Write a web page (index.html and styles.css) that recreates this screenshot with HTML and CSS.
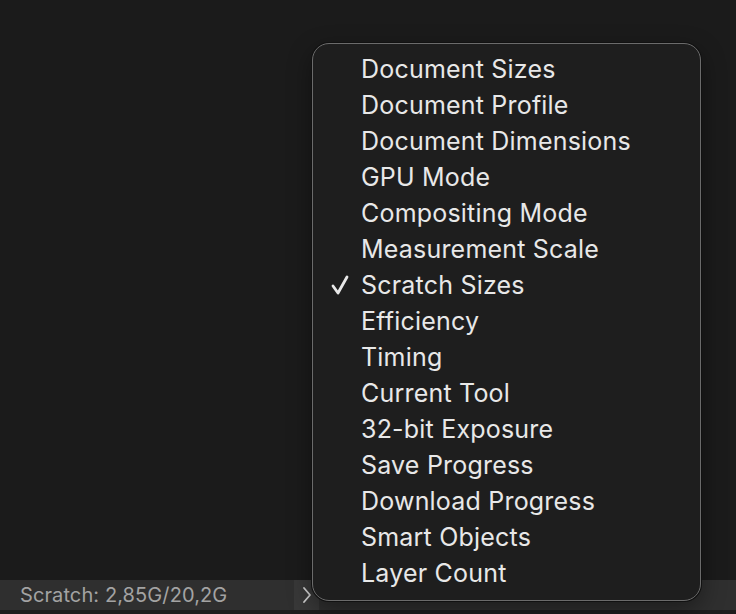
FILE: index.html
```html
<!DOCTYPE html>
<html lang="en">
<head>
<meta charset="utf-8">
<title>Status bar info menu</title>
<link rel="stylesheet" href="styles.css">
</head>
<body>
<div class="app">
  <main class="canvas"></main>
  <footer class="statusbar">
    <span class="status-text">Scratch: 2,85G/20,2G</span>
    <button class="status-toggle" aria-label="Show status options">
      <svg width="10" height="18" viewBox="0 0 10 18"><path d="M2 2 L8 9 L2 16" fill="none" stroke="#cfcfcf" stroke-width="1.8" stroke-linecap="round" stroke-linejoin="round"/></svg>
    </button>
  </footer>
  <div class="bottom-strip"></div>

  <ul class="menu">
    <li>Document Sizes</li>
    <li>Document Profile</li>
    <li>Document Dimensions</li>
    <li>GPU Mode</li>
    <li>Compositing Mode</li>
    <li>Measurement Scale</li>
    <li class="checked">
      <svg class="check" width="18" height="20" viewBox="0 0 18 20"><path d="M2 11 L7 18 L16 2" fill="none" stroke="#e8e8e8" stroke-width="2.8" stroke-linecap="round" stroke-linejoin="round"/></svg>
      Scratch Sizes
    </li>
    <li>Efficiency</li>
    <li>Timing</li>
    <li>Current Tool</li>
    <li>32-bit Exposure</li>
    <li>Save Progress</li>
    <li>Download Progress</li>
    <li>Smart Objects</li>
    <li>Layer Count</li>
  </ul>
</div>
</body>
</html>
```
FILE: styles.css
```css
* { box-sizing: border-box; }

html, body {
  margin: 0;
  height: 100%;
  background: #1b1b1b;
  font-family: Inter, "Noto Sans", "Liberation Sans", sans-serif;
}

.app {
  position: relative;
  height: 614px;
  display: flex;
  flex-direction: column;
}

.canvas {
  flex: 1;
}

.statusbar {
  height: 30px;
  background: #2f2f2f;
  display: flex;
  align-items: stretch;
}

.status-text {
  width: 294px;
  padding-left: 20px;
  color: #a3a3a3;
  font-size: 20px;
  line-height: 30px;
  letter-spacing: 0.1px;
}

.status-toggle {
  width: 25px;
  border: 0;
  padding: 0;
  background: #383838;
  display: flex;
  align-items: center;
  justify-content: center;
}

.bottom-strip {
  height: 4px;
  background: #1e1e1e;
}

/* popup menu floating above the status bar */
.menu {
  position: absolute;
  left: 312px;
  top: 43px;
  width: 389px;
  height: 558px;
  margin: 0;
  padding: 7px 0 0 48px;
  list-style: none;
  background: #1e1e1e;
  border: 1.5px solid #6b6b6b;
  border-radius: 17px;
  box-shadow: 0 0 0 1px #111, 0 8px 24px rgba(0,0,0,0.4);
}

.menu li {
  position: relative;
  height: 36px;
  line-height: 36px;
  font-size: 25px;
  color: #e8e8e8;
  letter-spacing: 0.2px;
}

.menu .check {
  position: absolute;
  left: -30px;
  top: 8px;
}
```
